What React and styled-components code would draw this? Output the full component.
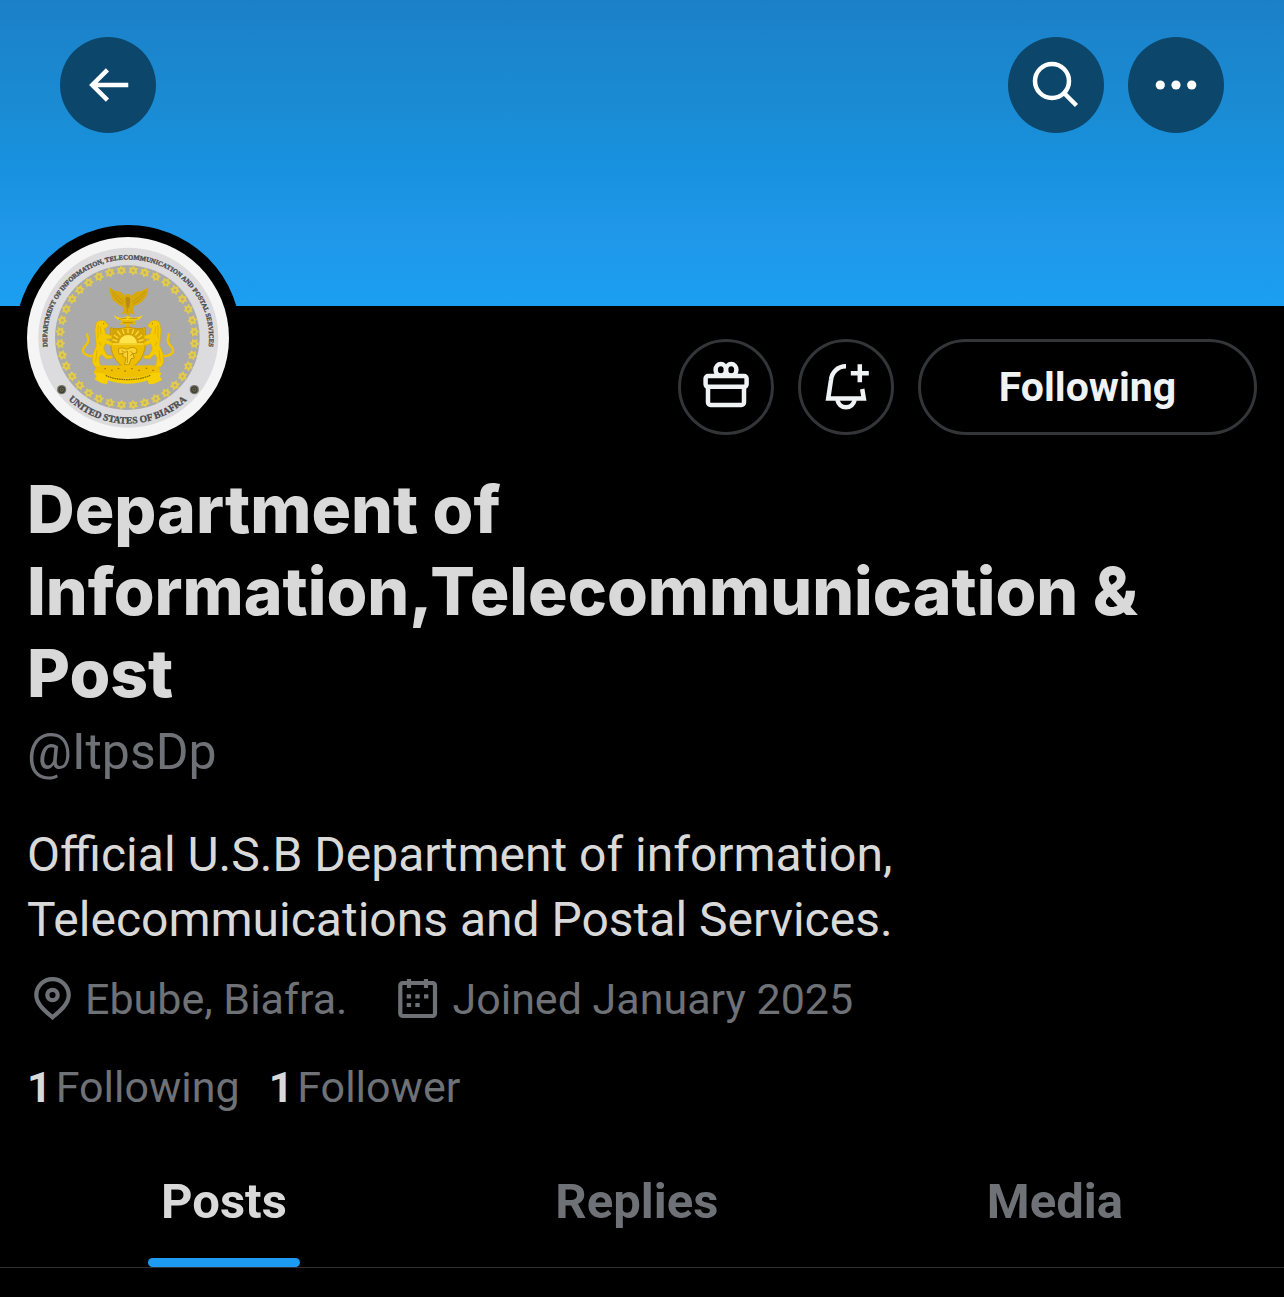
import {useState} from "react";
import styled, {createGlobalStyle} from "styled-components"; //Style library

const tabs = ['Posts', 'Replies', 'Media']
const stars = Array.from({length: 36}, (_, i) => i * 10 + 5)

export default function App() {
  const [active, setActive] = useState('Posts')

  return (
    <>
      <GlobalStyle />
      <Banner>
        <RoundButton type="button" aria-label="Back">
          <Icon viewBox="0 0 24 24">
            <path fill="currentColor" stroke="none" d="M7.414 13l5.043 5.04-1.414 1.42L3.586 12l7.457-7.46 1.414 1.42L7.414 11H21v2H7.414z" />
          </Icon>
        </RoundButton>
        <Group>
          <RoundButton type="button" aria-label="Search">
            <Icon viewBox="0 0 54 54">
              <circle cx="23" cy="23" r="17" />
              <path d="M35 35L47.500 47.500" />
            </Icon>
          </RoundButton>
          <RoundButton type="button" aria-label="More">
            <Icon viewBox="0 0 54 54">
              <g fill="currentColor" stroke="none">
                <circle cx="11.300" cy="27" r="4.600" />
                <circle cx="27" cy="27" r="4.600" />
                <circle cx="42.700" cy="27" r="4.600" />
              </g>
            </Icon>
          </RoundButton>
        </Group>
      </Banner>

      <Profile>
        <AvatarRow>
          <Avatar><Seal /></Avatar>
          <Actions>
            <OutlineButton type="button" aria-label="Gift">
              <Icon viewBox="0 0 54 54">
                <ellipse cx="21.800" cy="9.800" rx="5.200" ry="5.800" />
                <ellipse cx="32.200" cy="9.800" rx="5.200" ry="5.800" />
                <rect x="6.600" y="16" width="41" height="10.800" rx="2.500" />
                <path d="M9 27v15.500a2.500 2.500 0 0 0 2.500 2.500h31a2.500 2.500 0 0 0 2.500-2.500V27" />
              </Icon>
            </OutlineButton>
            <OutlineButton type="button" aria-label="Notify me">
              <Icon viewBox="0 0 54 54">
                <path d="M27 6.300C18.500 6.300 12.700 12.500 12 20L9.200 38.400H44.800L43.200 29" />
                <path d="M18.300 40c1.200 4.300 4.500 7.300 8.700 7.300s7.500-3 8.700-7.300" />
                <path d="M40.800 4.300v18M31.800 13.300h18" />
              </Icon>
            </OutlineButton>
            <OutlineButton type="button" $wide>Following</OutlineButton>
          </Actions>
        </AvatarRow>

        <Name>Department of Information,Telecommunication &amp; Post</Name>
        <Handle>@ItpsDp</Handle>
        <Bio>Official U.S.B Department of information, Telecommuications and Postal Services.</Bio>

        <Meta>
          <MetaItem>
            <MetaIcon viewBox="-1 0 48 48">
              <path d="M24.500 42.300C17 36 8.300 29 8.300 20.300a16.200 16.200 0 0 1 32.400 0C40.700 29 32 36 24.500 42.300z" />
              <circle cx="24.500" cy="20" r="5.200" />
            </MetaIcon>
            Ebube, Biafra.
          </MetaItem>
          <MetaItem>
            <MetaIcon viewBox="0 0 48 48">
              <rect x="6.300" y="8" width="34.700" height="33" rx="2.500" />
              <path d="M15 4v9M32 4v9M12.700 21.300h4.400M21.300 21.300h4.400M30 21.300h4.400M12.700 30h4.400M21.300 30h4.400" />
            </MetaIcon>
            Joined January 2025
          </MetaItem>
        </Meta>

        <Stats>
          <a href="#following"><b>1</b>Following</a>
          <a href="#followers"><b>1</b>Follower</a>
        </Stats>
      </Profile>

      <Tabs>
        {tabs.map(tab => (
          <Tab key={tab} type="button" $active={tab === active} onClick={() => setActive(tab)}>{tab}</Tab>
        ))}
      </Tabs>
    </>
  )
}

function Lion() {
  return (
    <g>
      <path d="M60 242C46 246 22 240 24 224C26 212 42 208 40 194C39 186 35 182 37 178" fill="none" stroke="#f2c500" strokeWidth="7" strokeLinecap="round" />
      <path d="M64 144C72 132 92 136 94 144L100 151L95 158L88 161L92 176L110 182L111 191L94 192L112 203L110 212L90 206L86 222L96 240L112 242L112 250L94 252L80 238L72 248L74 264L80 276L60 276L52 262L54 236L64 212L62 190L60 164Z" fill="#f5cb00" stroke="#d8a800" strokeWidth="1.500" />
      <path d="M70 150C66 164 72 176 68 190M76 154L78 178M72 200L78 212M66 226L62 260" fill="none" stroke="#d3a300" strokeWidth="2" />
      <circle cx="86" cy="146" r="2" fill="#a87900" />
    </g>
  )
}

function Seal() {
  return (
    <SealArt viewBox="0 0 606 606" role="img" aria-label="Seal of the department">
      <defs>
        <path id="arc-top" d="M62 329A243 234 0 1 1 541 350" />
        <path id="arc-bottom" d="M124 488A258 258 0 0 0 510 455" />
      </defs>
      <circle cx="303" cy="303" r="303" fill="#f5f5f5" />
      <circle cx="304" cy="302" r="270" fill="#dcdcde" />
      <circle cx="301" cy="302" r="217" fill="#aaaaab" />

      <SealText $size={20}><textPath href="#arc-top">DEPARTMENT OF INFORMATION, TELECOMMUNICATION AND POSTAL SERVICES</textPath></SealText>
      <SealText $size={29}><textPath href="#arc-bottom">UNITED STATES OF BIAFRA</textPath></SealText>

      {[104, 502].map(x => (
        <g key={x}>
          <circle cx={x} cy="458" r="14" fill="#77776c" />
          <circle cx={x} cy="458" r="10" fill="#3e3e32" />
          <circle cx={x} cy="458" r="5" fill="none" stroke="#85835f" strokeWidth="2" />
        </g>
      ))}

      {stars.map(angle => (
        <g key={angle} transform={`rotate(${angle} 301 302) translate(301 100)`}>
          <path d="M0-15L5-8L14-8L10 0L14 8L5 8L0 15L-5 8L-14 8L-10 0L-14-8L-5-8Z" fill="#e3cc4c" />
          <circle r="4" fill="#b9ad73" />
        </g>
      ))}

      <g transform="translate(144 114)">
        {/* eagle */}
        <path d="M103 36L118 47L136 50L149 62L153 57L161 57L169 62L184 50L202 47L220 36L219 50L213 66L203 78L190 88L176 94L173 105L179 119L165 114L159 124L151 114L139 119L146 105L143 95L129 88L114 76L106 58Z" fill="#d8a90b" />
        <path d="M110 48L132 68L146 80M112 58L128 76L144 88M214 48L190 68L172 80M211 58L192 76L174 88M157 70V112" fill="none" stroke="#b98d14" strokeWidth="2" />
        <path d="M151 70C156 62 163 64 166 74L162 98L155 98Z" fill="#b58a15" />
        {/* wreath and helmet */}
        <path d="M116 121C132 132 148 129 158 122C170 130 186 131 203 120C198 135 182 139 158 138C136 139 122 134 116 121Z" fill="#f8d211" />
        <path d="M140 136H178L183 149L166 146L164 156H152L150 146L134 150Z" fill="#e6b800" />
        <path d="M132 133L156 129M161 131L188 131M144 143H174" stroke="#a87d08" strokeWidth="2" />
        {/* shield */}
        <path d="M107 158C122 164 143 160 159 156C175 160 195 164 211 158V210C207 248 188 270 159 284C130 270 111 248 107 210Z" fill="#edbf00" stroke="#c79700" strokeWidth="3" />
        <path d="M109 162H209V205H109Z" fill="#d5a408" />
        <path d="M132 205A27 25 0 0 1 186 205Z" fill="#ffe34a" />
        <path d="M127 198L112 194M130 189L117 180M137 181L127 168M147 176L142 163M159 174V161M171 176L176 163M181 181L191 168M188 189L201 180M191 198L206 194" stroke="#fbda35" strokeWidth="4" />
        <path d="M108 207H210" stroke="#fbe05a" strokeWidth="3" />
        <path d="M130 222C145 212 151 228 162 220C178 212 190 222 184 234L173 236L178 249L168 251L162 270L149 268L153 249L143 244L145 234L132 238Z" fill="#f9d32c" stroke="#a97c09" strokeWidth="2" />
        <path d="M139 226L149 232L158 229L157 264M166 228L173 235L166 243" fill="none" stroke="#a97c09" strokeWidth="2" />
        {/* supporters */}
        <Lion />
        <g transform="translate(318 0) scale(-1 1)"><Lion /></g>
        {/* ground and motto */}
        <path d="M64 276C90 264 126 276 159 270C194 276 226 264 252 276L256 292L246 308L66 308L56 292Z" fill="#eec000" />
        <path d="M58 294C86 290 94 302 122 306C146 309 180 309 202 304C224 298 234 290 260 294L254 304L262 314L238 326L222 328L218 316C184 330 134 330 100 316L96 328L78 324L58 312L66 304Z" fill="#f8d000" />
        <path d="M92 301C124 318 190 318 226 301" fill="none" stroke="#8e6805" strokeWidth="4" strokeDasharray="5 2" />
        <path d="M88 281h5M108 286h5M128 281h5M148 288h5M168 281h5M190 286h5M212 280h5M232 286h5" stroke="#a97c09" strokeWidth="4" />
      </g>
    </SealArt>
  )
}


// ----------------------- Styled Components -----------------------
const GlobalStyle = createGlobalStyle`
  body {
    margin: 0;
    background-color: #000000;
    color: #d9d9d9;
    font-family: Roboto, "Liberation Sans", sans-serif;
  }

  button {
    font-family: inherit;
    cursor: pointer;
  }
`

const Banner = styled.header`
  display: flex;
  justify-content: space-between;
  box-sizing: border-box;
  height: 306px;
  padding: 37px 60px;
  background: linear-gradient(#1b80c8, #1a8cd4 36%, #1892e0 56%, #2097e9 75%, #1b9ff1);
`

const Group = styled.div`
  display: flex;
  gap: 24px;
`

const RoundButton = styled.button`
  display: flex;
  align-items: center;
  justify-content: center;
  width: 96px;
  height: 96px;
  padding: 0;
  border: none;
  border-radius: 50%;
  background-color: #0c476b;
  color: white;
`

const Icon = styled.svg`
  width: 54px;
  height: 54px;
  fill: none;
  stroke: currentColor;
  stroke-width: 4.5;
`

const Profile = styled.main`
  padding: 0 27px;
`

const AvatarRow = styled.div`
  display: flex;
  align-items: flex-end;
  justify-content: space-between;
  margin: -81px 0 0 -12px;
`

const Avatar = styled.div`
  width: 202px;
  height: 202px;
  border: 12px solid #000000;
  border-radius: 50%;
  background-color: #000000;
`

const SealArt = styled.svg`
  display: block;
  width: 100%;
  height: 100%;
`

const SealText = styled.text`
  font-family: "Liberation Serif", serif;
  font-size: ${props => props.$size}px;
  font-weight: bold;
  fill: #4c4c50;
  stroke: #4c4c50;
  stroke-width: 1;
`

const Actions = styled.div`
  display: flex;
  gap: 24px;
  padding-bottom: 16px;
`

const OutlineButton = styled.button`
  display: flex;
  align-items: center;
  justify-content: center;
  box-sizing: border-box;
  width: ${props => props.$wide ? '339px' : '96px'};
  height: 96px;
  padding: 0;
  border: 3px solid #333537;
  border-radius: 48px;
  background-color: transparent;
  color: #eff3f4;
  font-size: 41px;
  font-weight: 700;
`

const Name = styled.h1`
  margin: 17px 0 0;
  font-family: Inter, Roboto, sans-serif;
  font-size: 66px;
  font-weight: 800;
  line-height: 82px;
`

const Handle = styled.p`
  margin: 8px 0 0;
  color: #6e7176;
  font-size: 50px;
  line-height: 60px;
`

const Bio = styled.p`
  max-width: 1000px;
  margin: 40px 0 0;
  font-size: 48px;
  line-height: 65px;
`

const Meta = styled.div`
  display: flex;
  gap: 47px;
  margin-top: 23px;
  color: #6e7176;
  font-size: 43px;
  line-height: 48px;
`

const MetaItem = styled.span`
  display: flex;
  gap: 10px;
`

const MetaIcon = styled.svg`
  width: 48px;
  height: 48px;
  fill: none;
  stroke: currentColor;
  stroke-width: 4.2;
`

const Stats = styled.div`
  display: flex;
  gap: 29px;
  margin-top: 40px;
  font-size: 43px;
  line-height: 48px;

  a {
    display: flex;
    gap: 4px;
    color: #6e7176;
    text-decoration: none;
  }

  b {
    color: #d9d9d9;
  }
`

const Tabs = styled.nav`
  display: flex;
  justify-content: space-between;
  margin-top: 61px;
  padding: 0 148px;
  border-bottom: 1px solid #2f3133;
`

const Tab = styled.button`
  padding: 0 13px;
  border: none;
  background-color: transparent;
  color: ${props => props.$active ? '#d9d9d9' : '#6e7176'};
  font-size: 49px;
  font-weight: 700;
  line-height: 60px;

  &::after {
    content: '';
    display: block;
    height: 9px;
    margin: 26px -13px 0;
    border-radius: 5px;
    background-color: ${props => props.$active ? '#1d9bf0' : 'transparent'};
  }
`
